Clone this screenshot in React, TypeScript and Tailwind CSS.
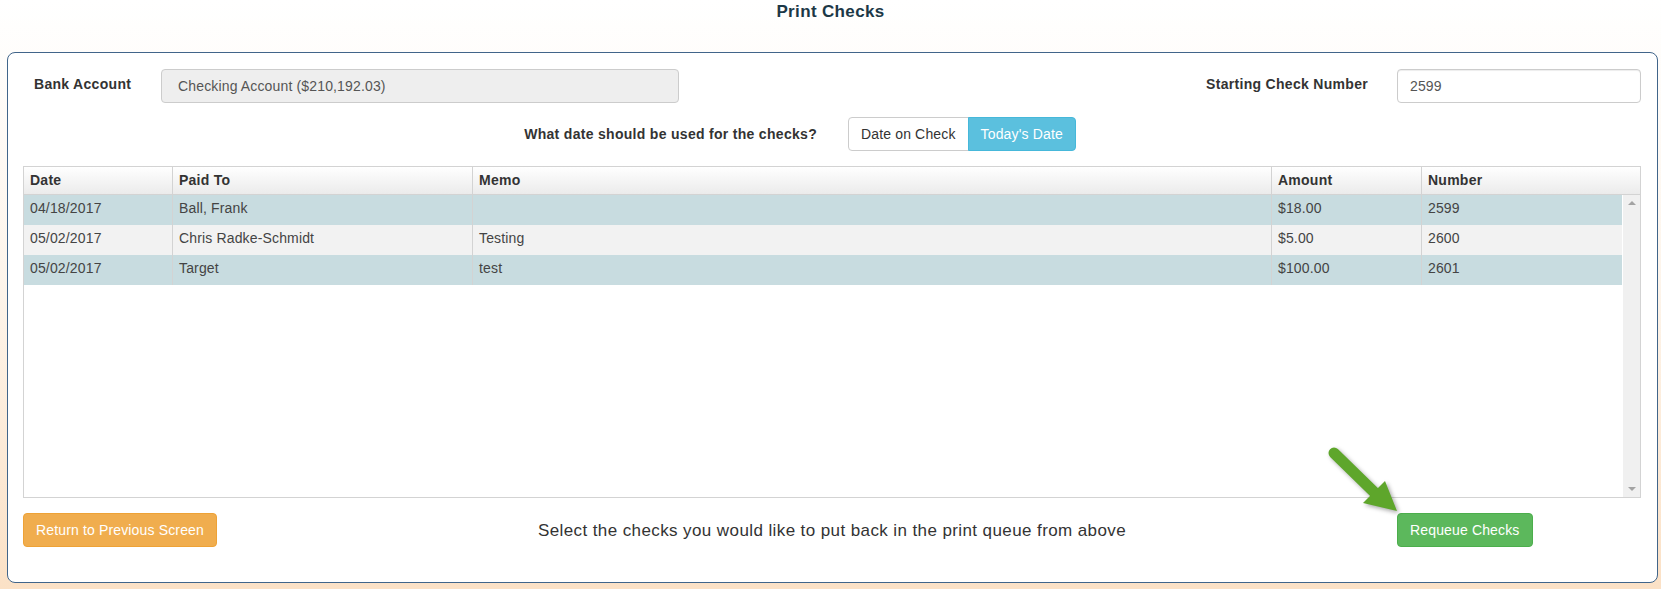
import { ReactNode } from 'react';

type Check = {
  date: string;
  paidTo: string;
  memo: string;
  amount: string;
  number: string;
  selected: boolean;
};

const checks: Check[] = [
  { date: '04/18/2017', paidTo: 'Ball, Frank', memo: '', amount: '$18.00', number: '2599', selected: true },
  { date: '05/02/2017', paidTo: 'Chris Radke-Schmidt', memo: 'Testing', amount: '$5.00', number: '2600', selected: false },
  { date: '05/02/2017', paidTo: 'Target', memo: 'test', amount: '$100.00', number: '2601', selected: true },
];

function HeadCell({ className, children }: { className: string; children: ReactNode }) {
  return (
    <div className={`flex items-center pl-[6px] font-bold tracking-[0.25px] text-[#333] ${className}`}>{children}</div>
  );
}

function Cell({ className, children }: { className: string; children?: ReactNode }) {
  return <div className={`flex items-center pb-[3px] pl-[6px] text-[#444] ${className}`}>{children}</div>;
}

function GreenArrow() {
  return (
    <svg
      width="76"
      height="70"
      viewBox="0 0 76 70"
      className="absolute left-[-70px] top-[-67px] drop-shadow-[2px_2px_2px_rgba(0,0,0,0.35)]"
    >
      <line x1="7" y1="7" x2="48" y2="47" stroke="#5ea62b" strokeWidth="11" strokeLinecap="round" />
      <polygon points="36,57 58,35 70,65" fill="#5ea62b" />
    </svg>
  );
}

export default function App() {
  return (
    <div className="min-h-[589px] bg-linear-to-b from-white via-[#fdf4ea] to-[#fbe1c6] font-['Liberation_Sans',Arial,sans-serif] text-[14px] tracking-[0.15px]">
      {/* Titre */}
      <div className="pt-[2px] pb-[30px] text-center text-[17px] leading-[20px] font-bold tracking-[0.35px] text-[#1c3847]">
        Print Checks
      </div>

      <div className="ml-[7px] mr-[3px] rounded-[8px] border border-[#41658a] bg-white pt-[16px] pb-[35px] pl-[15px] pr-[16px]">
        {/* Compte + numéro */}
        <div className="flex items-start">
          <div className="w-[138px] pl-[11px] pt-[6px] leading-[18px] font-bold tracking-[0.3px] text-[#333]">Bank Account</div>
          <div className="flex h-[34px] w-[518px] items-center rounded-[4px] border border-[#ccc] bg-[#eee] pl-[16px] text-[#555]">
            Checking Account ($210,192.03)
          </div>
          <div className="flex-1" />
          <div className="pt-[6px] pr-[29px] leading-[18px] font-bold tracking-[0.3px] text-[#333]">Starting Check Number</div>
          <div className="flex h-[34px] w-[244px] items-center rounded-[4px] border border-[#ccc] bg-white pl-[12px] text-[#555] shadow-[inset_0_1px_1px_rgba(0,0,0,0.075)]">
            2599
          </div>
        </div>

        {/* Choix de la date */}
        <div className="mt-[14px] grid grid-cols-2">
          <div className="flex items-center justify-end pr-[15px] font-bold tracking-[0.3px] text-[#333]">
            What date should be used for the checks?
          </div>
          <div className="flex pl-[16px]">
            <div className="flex h-[34px] items-center rounded-l-[4px] border border-[#ccc] bg-white px-[12px] text-[#333]">
              Date on Check
            </div>
            <div className="-ml-px flex h-[34px] items-center rounded-r-[4px] border border-[#46b8da] bg-[#5bc0de] px-[12px] text-white">
              Today's Date
            </div>
          </div>
        </div>

        {/* Tableau */}
        <div className="mt-[15px] h-[332px] border border-[#d3d3d3] bg-white">
          <div className="flex h-[28px] border-b border-[#d3d3d3] bg-linear-to-b from-white to-[#ebebeb]">
            <HeadCell className="w-[149px] border-r border-[#d3d3d3]">Date</HeadCell>
            <HeadCell className="w-[300px] border-r border-[#d3d3d3]">Paid To</HeadCell>
            <HeadCell className="w-[799px] border-r border-[#d3d3d3]">Memo</HeadCell>
            <HeadCell className="w-[150px] border-r border-[#d3d3d3]">Amount</HeadCell>
            <HeadCell className="flex-1">Number</HeadCell>
          </div>
          <div className="flex h-[302px]">
            <div className="flex-1 pr-px">
              {checks.map((c) => (
                <div
                  key={c.number}
                  className={`flex h-[30px] ${c.selected ? 'bg-[#c8dce0]' : 'bg-[#f2f2f2]'}`}
                >
                  <Cell className="w-[149px] border-r border-[#d3d3d3]">{c.date}</Cell>
                  <Cell className="w-[300px] border-r border-[#d3d3d3]">{c.paidTo}</Cell>
                  <Cell className="w-[799px] border-r border-[#d3d3d3]">{c.memo}</Cell>
                  <Cell className="w-[150px] border-r border-[#d3d3d3]">{c.amount}</Cell>
                  <Cell className="flex-1">{c.number}</Cell>
                </div>
              ))}
            </div>
            {/* barre de défilement */}
            <div className="flex w-[17px] flex-col items-center justify-between bg-[#f0f0f0] py-[6px]">
              <div className="h-0 w-0 border-x-[4px] border-b-[4px] border-x-transparent border-b-[#a3a3a3]" />
              <div className="h-0 w-0 border-x-[4px] border-t-[4px] border-x-transparent border-t-[#a3a3a3]" />
            </div>
          </div>
        </div>

        {/* Actions */}
        <div className="mt-[15px] grid grid-cols-[1fr_auto_1fr] items-center">
          <div className="flex">
            <button className="h-[34px] rounded-[4px] border border-[#eea236] bg-[#f0ad4e] px-[12px] text-white">
              Return to Previous Screen
            </button>
          </div>
          <div className="pt-[1px] text-[17px] tracking-[0.4px] text-[#333]">
            Select the checks you would like to put back in the print queue from above
          </div>
          <div className="flex justify-end">
            <div className="w-[244px]">
              <div className="relative inline-block">
                <GreenArrow />
                <button className="h-[34px] rounded-[4px] border border-[#4cae4c] bg-[#5cb85c] px-[12px] text-white">
                  Requeue Checks
                </button>
              </div>
            </div>
          </div>
        </div>
      </div>
    </div>
  );
}
